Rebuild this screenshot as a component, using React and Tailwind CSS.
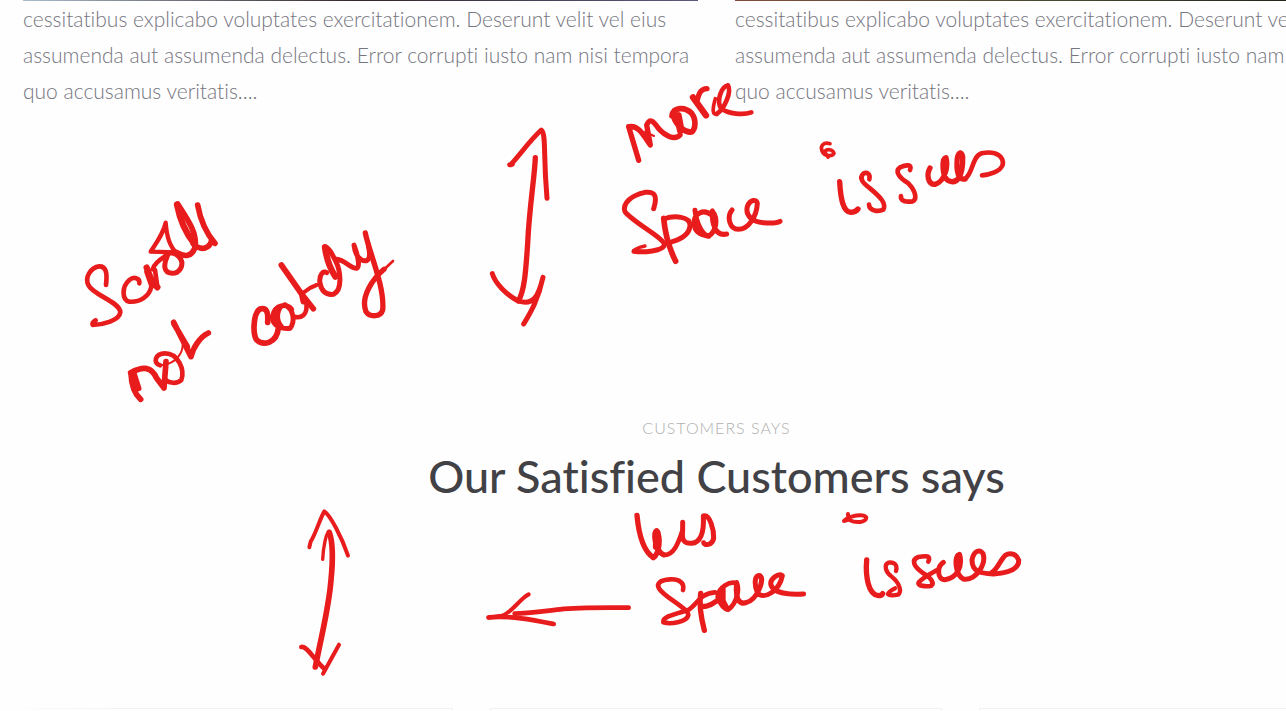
const excerpt = [
  "cessitatibus explicabo voluptates exercitationem. Deserunt velit vel eius",
  "assumenda aut assumenda delectus. Error corrupti iusto nam nisi tempora",
  "quo accusamus veritatis....",
];

const photoStrips = [
  "bg-linear-to-r from-[#a9bccb] via-[#33262b] to-[#5b5a80]",
  "bg-linear-to-r from-[#804c40] via-[#43492f] to-[#15100f]",
];

// Freehand notes. Each group has an origin and strokes in thirds of a pixel: [width, path].
const notes = [
  {
    name: "scroll", x: 70, y: 190,
    strokes: [
      [14, "M108 285C113 245 106 228 88 229C62 232 44 262 55 285C68 315 150 335 151 367C148 392 100 404 68 405C66 400 70 395 77 391"],
      [14, "M208 280C210 262 190 260 178 270C155 290 155 330 178 335C210 337 238 320 244 290"],
      [19, "M230 233C238 250 240 275 262 292M232 245L246 285"],
      [14, "M248 238C252 222 275 205 290 196M255 240L262 290"],
      [15, "M292 198C280 225 280 247 306 250C330 250 342 225 332 207C322 192 305 186 290 192"],
      [13, "M242 185L318 187C300 170 290 140 287 98C280 130 262 155 242 185Z"],
      [19, "M321 44C328 80 340 120 372 160"],
      [17, "M323 42C350 85 385 130 374 175C365 200 345 202 318 187"],
      [17, "M370 162C395 185 420 175 425 150M383 45C390 85 405 125 435 160"],
    ],
  },
  {
    name: "not catchy", x: 110, y: 220,
    strokes: [
      [17, "M63 460C64 495 72 520 92 538M72 462L86 505"],
      [17, "M62 458C100 438 125 440 140 475L162 504L168 425"],
      [14, "M150 436C128 430 135 400 165 400C205 400 225 450 214 480C200 493 175 490 165 478"],
      [6, "M150 435C170 437 195 425 205 410C213 400 218 390 218 375"],
      [17, "M191 307L243 410C248 385 270 350 295 339M192 312L232 380"],
      [17, "M473 307C475 275 470 262 450 267C430 280 427 340 440 360C460 378 500 370 505 325"],
      [15, "M545 268C530 250 495 252 487 290C487 320 520 328 540 325C556 305 552 268 525 254C500 260 495 300 515 320"],
      [20, "M500 272L500 310"],
      [14, "M552 290C570 295 597 290 588 240"],
      [12, "M580 218C595 205 605 200 620 195"],
      [17, "M514 135L575 222L610 266M575 222L580 245"],
      [15, "M650 158C640 150 626 165 630 190C635 215 650 225 670 223C700 210 690 150 678 125C665 100 655 80 644 80"],
      [19, "M645 82C650 120 660 145 676 170"],
      [15, "M680 118C705 120 720 145 740 145C750 140 745 110 732 75C735 105 750 125 770 122C780 118 780 100 775 75"],
      [16, "M766 39C775 90 825 200 818 270C812 292 780 292 768 275C750 230 790 175 822 148"],
      [8, "M812 158L849 123"],
    ],
  },
  {
    name: "tall arrow", x: 470, y: 110,
    strokes: [
      [15, "M122 164C150 135 180 90 214 60C222 65 223 90 224 130C225 180 228 230 231 265M119 164L127 163"],
      [16, "M196 143C194 200 178 290 173 400C168 470 165 540 145 573"],
      [15, "M67 491C75 520 110 555 145 573C190 588 205 560 219 502M161 642C180 610 205 570 219 502"],
    ],
  },
  {
    name: "more space", x: 610, y: 70,
    strokes: [
      [16, "M56 170L86 271M58 170C85 165 100 195 121 225L110 165C120 143 130 153 145 175C165 198 195 212 210 195"],
      [6, "M105 185L132 198"],
      [17, "M186 138C190 110 225 110 245 130C260 150 256 178 245 186C225 188 200 170 190 138"],
      [23, "M204 138L212 180"],
      [19, "M249 82L288 136"],
      [16, "M262 90C268 65 275 57 291 56"],
      [11, "M316 86C306 120 308 135 320 132"],
      [14, "M320 132C345 115 365 65 354 46C335 50 318 90 333 115C355 132 400 136 424 127"],
      [15, "M131 416C145 372 130 364 105 367C65 375 36 400 45 425C65 455 165 505 163 525C160 543 100 548 72 544"],
      [10, "M72 544C68 540 85 532 105 528"],
      [17, "M161 445C165 490 175 530 197 574"],
      [15, "M161 447C195 435 240 440 240 465C240 490 220 505 187 515"],
      [15, "M305 435C280 415 252 430 252 460C254 485 267 493 295 499C320 485 325 445 307 423C305 460 315 500 350 492M255 421C260 460 275 495 297 499"],
      [15, "M366 420C350 440 358 478 385 478C415 478 440 440 442 400C440 387 420 387 412 410C405 440 430 455 460 458C480 460 500 460 510 454"],
    ],
  },
  {
    name: "issues", x: 800, y: 120,
    strokes: [
      [11, "M90 71C70 65 60 78 66 93C72 108 95 112 102 100C98 85 80 88 74 94C78 105 84 108 84 112"],
      [16, "M119 185C122 240 130 275 152 277C165 277 170 272 174 267"],
      [14, "M208 178C212 160 200 156 190 161C175 175 190 190 210 205C240 230 260 250 250 269C235 276 208 273 207 254"],
      [14, "M330 150C338 132 318 134 300 142C282 155 300 175 325 190C350 215 350 240 338 244C320 247 300 244 303 228"],
      [16, "M390 144C378 165 385 194 405 193C435 184 445 140 438 113C425 115 425 170 445 182C470 194 490 170 488 110C484 92 471 95 471 130C470 165 480 180 495 177"],
      [14, "M495 177C520 160 515 110 545 100C590 91 613 110 608 135C600 155 570 164 546 166"],
    ],
  },
  {
    name: "short arrow", x: 280, y: 490,
    strokes: [
      [12, "M88 172L92 155C108 130 120 85 133 64C150 75 185 140 204 197"],
      [10, "M128 208C130 170 138 130 147 124"],
      [17, "M148 127C158 155 160 200 153 270C147 350 128 420 106 531"],
      [14, "M64 471C82 467 102 510 135 538"],
      [12, "M177 464L129 551"],
    ],
  },
  {
    name: "less space", x: 470, y: 500,
    strokes: [
      [14, "M476 323C380 322 320 322 270 328C220 333 180 340 134 341"],
      [12, "M176 283C150 295 125 340 95 347L55 353"],
      [14, "M56 352C120 346 190 360 251 372"],
      [16, "M501 46C505 90 515 150 550 173C570 160 572 110 560 92C550 97 553 150 580 164"],
      [14, "M580 164C610 169 625 130 638 90"],
      [21, "M561 98L559 140"],
      [15, "M638 67L638 90C635 120 640 131 665 130C690 129 703 100 700 48C720 42 732 90 731 115C726 137 702 137 701 128"],
      [14, "M639 270C645 247 625 236 600 238C570 240 559 250 567 265C580 290 655 325 655 345C650 368 600 373 580 367C575 350 620 341 655 330C680 315 690 280 735 277"],
      [16, "M692 280C686 320 695 360 703 391M695 320C715 320 735 310 755 290"],
      [14, "M800 250C780 242 745 262 743 290C746 310 765 330 775 329C800 310 810 270 800 247M760 262L760 312M748 280L772 325"],
      [15, "M800 250C795 290 805 317 830 307C860 300 885 240 870 227C855 222 851 250 862 277C880 303 928 273 937 227C925 218 898 237 903 255C910 280 960 284 1001 282"],
    ],
  },
  {
    name: "issues again", x: 820, y: 500,
    strokes: [
      [12, "M84 42C85 55 88 62 72 63C90 46 130 40 139 52C138 67 110 71 88 60"],
      [16, "M140 180C136 230 145 284 175 287C183 287 186 284 188 281"],
      [13, "M228 213C234 191 220 186 205 188C191 195 196 215 215 230C240 250 246 275 234 284C220 287 206 287 204 282C206 275 215 270 225 265"],
      [14, "M325 185C333 167 320 167 295 171C272 180 281 200 310 220C335 235 343 250 334 257C320 261 292 258 296 248C305 235 330 222 352 210"],
      [15, "M370 187C350 200 351 239 375 239C410 234 430 200 418 163C401 167 406 225 430 237C470 243 499 190 489 161C480 147 461 151 456 180C456 215 480 220 520 222C560 219 598 209 596 180C590 162 570 156 556 166C540 180 535 205 515 218"],
      [20, "M417 168L414 205"],
    ],
  },
];

function Post({ strip }) {
  return (
    <article className="flex-1">
      <div className={`h-px ${strip}`} />
      <p className="text-[21px] leading-[36px] font-light text-[#75757f] [font-variant-ligatures:none]">
        {excerpt.map((line) => (
          <span key={line} className="block whitespace-nowrap">{line}</span>
        ))}
      </p>
    </article>
  );
}

function HandwrittenNotes() {
  return (
    <svg
      width="1286"
      height="711"
      viewBox="0 0 1286 711"
      fill="none"
      stroke="#e81c1c"
      strokeLinecap="round"
      strokeLinejoin="round"
      aria-hidden="true"
      className="pointer-events-none absolute top-0 left-0 max-w-none"
    >
      {notes.map((note) => (
        <g key={note.name} transform={`translate(${note.x} ${note.y}) scale(0.33333)`}>
          {note.strokes.map(([width, d]) => (
            <path key={d} d={d} strokeWidth={width} />
          ))}
        </g>
      ))}
    </svg>
  );
}

export default function App() {
  return (
    <div className="relative h-screen overflow-hidden bg-[#fefefe] font-['Lato','Open_Sans',sans-serif]">
      <main className="min-w-[1433px]">
        <section className="flex gap-[37px] px-[23px]">
          {photoStrips.map((strip) => (
            <Post key={strip} strip={strip} />
          ))}
        </section>

        <header className="mt-[307px] text-center">
          <p className="text-[16px] leading-[24px] font-light tracking-[1px] text-[#b0b0b0]">CUSTOMERS SAYS</p>
          <h2 className="mt-2 text-[45px] leading-[56px] font-medium text-[#414146] [font-variant-ligatures:none]">
            Our Satisfied Customers says
          </h2>
        </header>

        <section className="mt-[204px] flex gap-[37px] px-[3px]">
          <div className="h-20 flex-1 border-t border-r border-[#f2f2f2] mask-linear-90 mask-linear-from-transparent mask-linear-to-black mask-linear-to-25%" />
          <div className="h-20 flex-1 border border-[#f2f2f2]" />
          <div className="h-20 flex-1 border border-[#f2f2f2]" />
        </section>
      </main>
      <HandwrittenNotes />
    </div>
  );
}
